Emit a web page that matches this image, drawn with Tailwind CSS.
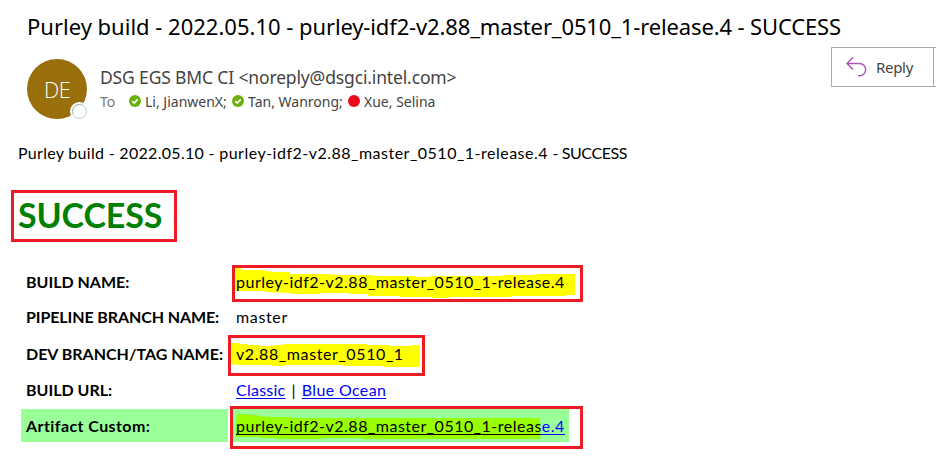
<!DOCTYPE html>
<html lang="en">
<head>
<meta charset="utf-8">
<title>Purley build</title>
<script src="https://cdn.jsdelivr.net/npm/@tailwindcss/browser@4"></script>
</head>
<body class="bg-white w-[936px] h-[465px] overflow-hidden text-black">
<header class="h-[140px] font-['Noto_Sans','Open_Sans',sans-serif]">
  <h1 class="pl-[27px] pt-[11px] text-[22px] leading-[30px] tracking-[-0.14px] whitespace-nowrap"><span class="tracking-[0px]">Purley build - 2022.05.10 - </span>purley-idf2-v2.88_master_0510_1-release.4 - SUCCESS</h1>
  <div class="flex pl-[27px] pt-[6px]">
    <div class="relative mt-[12px] size-[60px] rounded-full bg-[#986f0b] text-white flex items-center justify-center font-['Open_Sans','Noto_Sans',sans-serif] text-[21.5px] font-light tracking-[-0.5px] pt-[2px] shrink-0">DE
      <span class="absolute left-[45px] top-[45px] size-[15px] rounded-full bg-white border border-[#a0bfd0] outline-2 outline-white"></span>
    </div>
    <div class="ml-[13px] mt-[18px] text-[#444]">
      <div class="text-[17.5px] leading-[24px] tracking-[-0.15px] whitespace-nowrap">DSG EGS BMC CI &lt;noreply@dsgci.intel.com&gt;</div>
      <div class="-mt-px flex items-center text-[14px] leading-[24px] whitespace-nowrap">
        <span class="text-[#777] w-[29px] pt-[2px]">To</span>
        <svg class="size-[12px] mr-[4px]" viewBox="0 0 12 12"><circle cx="6" cy="6" r="6" fill="#6bb00b"/><path d="M3.3 6.1l1.900 1.900 3.500-3.600" fill="none" stroke="#fff" stroke-width="1.6"/></svg>
        <span class="w-[87px] pt-[2px]">Li, JianwenX;</span>
        <svg class="size-[12px] mr-[4px]" viewBox="0 0 12 12"><circle cx="6" cy="6" r="6" fill="#6bb00b"/><path d="M3.3 6.1l1.900 1.900 3.500-3.600" fill="none" stroke="#fff" stroke-width="1.6"/></svg>
        <span class="w-[100px] pt-[2px]">Tan, Wanrong;</span>
        <span class="size-[12px] rounded-full bg-[#eb0a1e] mr-[4px]"></span>
        <span class="pt-[2px]">Xue, Selina</span>
      </div>
    </div>
    <div class="ml-auto flex h-[40px] w-[105px] border-y border-l border-[#ababab] text-[#444]">
      <button class="flex w-[101px] shrink-0 items-center pl-[14px] text-[15px] tracking-[-0.3px] whitespace-nowrap">
        <svg class="mr-[9px] h-[20px] w-[21px]" viewBox="0 0 21 20" fill="none" stroke="#b055bd" stroke-width="1.5"><path d="M7 0.500L1 6.500l6 6M1 6.500h12.500a6 6 0 0 1 0 12.300h-1.500"/></svg>
        <span>Reply</span>
      </button>
      <span class="w-px shrink-0 bg-[#ababab]"></span>
    </div>
  </div>
</header>
<main class="font-['Lato',sans-serif] text-[16px] whitespace-nowrap">
  <p class="pl-[18px] pt-[1px] pb-[1px] leading-[24px] tracking-[0.3px]">Purley build - 2022.05.10 - <span class="tracking-[0.5px]">purley-idf2-v2.88_master_0510_1-release.4</span> <span class="tracking-[-0.4px]">- SUCCESS</span></p>
  <div class="ml-[11px] mt-[24px] flex h-[52px] w-[166px] items-center border-3 border-[#ed1c24] pl-[4px] pb-[3px] text-[34px] font-bold tracking-[-0.15px] text-[#008000]">SUCCESS</div>
  <dl class="ml-[21px] mt-[23px] grid grid-cols-[207px_338px] auto-rows-[33px] gap-[3px] leading-[33px] [&>dt]:pl-[5px] [&>dt]:font-bold [&>dd]:relative [&>dd]:pl-[5px] [&_a]:underline [&_a]:decoration-1 [&_a]:underline-offset-2 [&_a]:[text-decoration-skip-ink:none]">
    <dt>BUILD NAME:</dt>
    <dd>
      <svg class="absolute left-0 top-0 h-[36px] w-[352px]" viewBox="231 265 352 36"><path fill="#ff0" d="M235 268h6v2h20l13 2h16v2h33l20 1h25l11 1h36v1h15v-1h73v-1h32v-1h40v21h-9v1h-55v1h-61v1h-19v-1h-31v-1h-32v-2h-19v-1h-29v1h-29v-1l-26-1v-1h-30z"/></svg>
      <span class="relative tracking-[0.5px]">purley-idf2-v2.88_master_0510_1-release.4</span>
      <span class="absolute left-[1px] top-0 h-[37px] w-[351px] border-3 border-[#ed1c24]"></span>
    </dd>
    <dt class="-mt-px tracking-[-0.1px]">PIPELINE BRANCH NAME:</dt>
    <dd class="-mt-px tracking-[0.65px]">master</dd>
    <dt>DEV BRANCH/TAG NAME:</dt>
    <dd>
      <svg class="absolute left-[-3px] top-0 h-[38px] w-[197px]" viewBox="228 337 197 38"><path fill="#ff0" d="M231 343h8v1h9v1h11v1h10l18-2h80v1h23v1h22v-1h8v21h-1v1h-36v-1h-40v-1h-57v1h-14v-1h-34l-7-1z"/></svg>
      <span class="relative tracking-[0.6px]">v2.88_master_0510_1</span>
      <span class="absolute left-[-3px] top-[-2px] h-[41px] w-[197px] border-3 border-[#ed1c24]"></span>
    </dd>
    <dt>BUILD URL:</dt>
    <dd class="tracking-[0.35px]"><a class="text-[#00f] tracking-[0.25px]">Classic</a> <span class="px-[1.5px]">|</span> <a class="text-[#00f]">Blue Ocean</a></dd>
    <dt class="bg-[#9f9] tracking-[0.42px]">Artifact Custom:</dt>
    <dd class="bg-[#9f9]">
      <svg class="absolute left-0 top-0 h-[33px] w-[338px]" viewBox="231 409 338 33"><path fill="#9f0" d="M237 414h9l1 1h10v1l15 1h20v1h248v21H362v-1h-41v1h-44v-1h-16v-1h-25v-12z"/></svg>
      <a class="relative text-black tracking-[0.5px]">purley-idf2-v2.88_master_0510_1-releas<span class="text-[#00f] underline decoration-1 underline-offset-2 [text-decoration-skip-ink:none]">e.4</span></a>
      <span class="absolute left-[-1px] top-[-3px] h-[43px] w-[353px] border-3 border-[#ed1c24]"></span>
    </dd>
  </dl>
</main>
</body>
</html>
